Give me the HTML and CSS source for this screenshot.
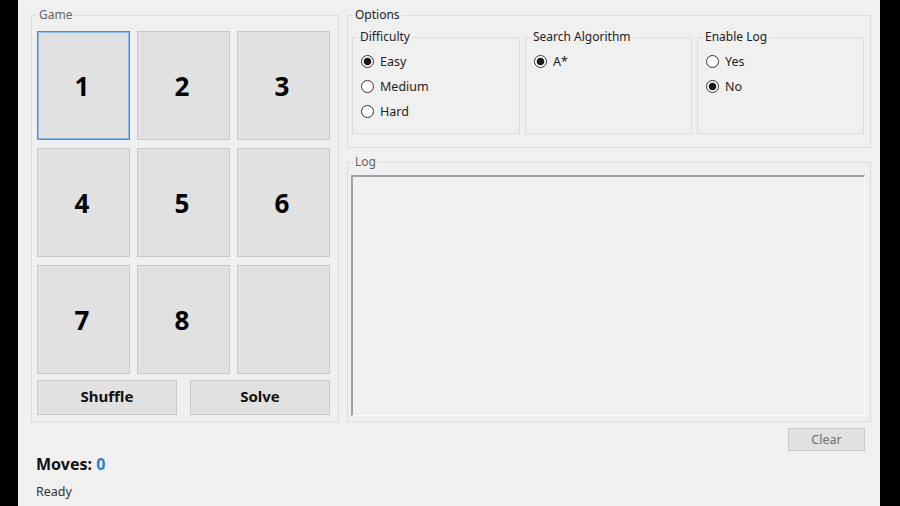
FILE: index.html
```html
<!DOCTYPE html>
<html>
<head>
<meta charset="utf-8">
<link rel="stylesheet" href="styles.css">
</head>
<body>
<div class="app">
  <div class="left">
    <div class="group game">
      <span class="gtitle light">Game</span>
      <div class="tiles">
        <div class="tile active">1</div>
        <div class="tile">2</div>
        <div class="tile">3</div>
        <div class="tile">4</div>
        <div class="tile">5</div>
        <div class="tile">6</div>
        <div class="tile">7</div>
        <div class="tile">8</div>
        <div class="tile"></div>
      </div>
      <div class="actions">
        <div class="btn">Shuffle</div>
        <div class="btn">Solve</div>
      </div>
    </div>
    <div class="moves">Moves: <span class="count">0</span></div>
    <div class="status">Ready</div>
  </div>
  <div class="right">
    <div class="group options">
      <span class="gtitle">Options</span>
      <div class="sub">
        <span class="gtitle">Difficulty</span>
        <div class="opt"><span class="radio on"></span>Easy</div>
        <div class="opt"><span class="radio"></span>Medium</div>
        <div class="opt"><span class="radio"></span>Hard</div>
      </div>
      <div class="sub">
        <span class="gtitle">Search Algorithm</span>
        <div class="opt"><span class="radio on"></span>A*</div>
      </div>
      <div class="sub">
        <span class="gtitle">Enable Log</span>
        <div class="opt"><span class="radio"></span>Yes</div>
        <div class="opt"><span class="radio on"></span>No</div>
      </div>
    </div>
    <div class="group log">
      <span class="gtitle light">Log</span>
      <div class="textbox"></div>
    </div>
    <div class="clearrow"><div class="btn clear">Clear</div></div>
  </div>
</div>
</body>
</html>
```
FILE: styles.css
```css
* { box-sizing: border-box; }
html, body { margin: 0; padding: 0; background: #000; }
body { width: 900px; height: 506px; overflow: hidden; font-family: "Noto Sans", "Open Sans", sans-serif; color: #222; }
.app {
  margin-left: 18px;
  width: 862px;
  height: 506px;
  background: #f0f0f0;
  display: flex;
  padding: 15px 0 0 13px;
  gap: 8px;
}
.group {
  position: relative;
  border: 1px solid #dcdcdc;
}
.gtitle {
  position: absolute;
  top: -9px;
  left: 5px;
  padding: 0 2px;
  background: #f0f0f0;
  font-size: 12px;
  line-height: 16px;
  color: #222;
}
.gtitle.light { color: #666; }
.left { width: 308px; display: flex; flex-direction: column; }
.game {
  width: 308px;
  height: 407px;
  padding: 15px 0 0 5px;
}
.tiles {
  display: grid;
  grid-template-columns: repeat(3, 93px);
  grid-auto-rows: 109px;
  column-gap: 7px;
  row-gap: 8px;
}
.tile {
  background: #e1e1e1;
  border: 1px solid #c8c8c8;
  display: flex;
  align-items: center;
  justify-content: center;
  font-size: 26px;
  font-weight: 700;
  color: #000;
  padding-right: 3px;
}
.tile.active {
  border-color: #3a8ee6;
  box-shadow: inset 0 0 0 1px #8fbdee;
}
.actions {
  display: flex;
  gap: 13px;
  margin-top: 6px;
}
.btn {
  background: #e1e1e1;
  border: 1px solid #c8c8c8;
  display: flex;
  align-items: center;
  justify-content: center;
}
.actions .btn {
  width: 140px;
  height: 35px;
  font-size: 15px;
  font-weight: 700;
  color: #111;
  padding-bottom: 3px;
}
.moves {
  margin-top: 31px;
  padding-left: 5px;
  font-size: 16px;
  font-weight: 700;
  line-height: 22px;
  color: #111;
}
.count { color: #2b7bd6; }
.status {
  margin-top: 8px;
  padding-left: 5px;
  font-size: 12.5px;
  line-height: 18px;
  color: #333;
}
.right { width: 524px; display: flex; flex-direction: column; }
.options {
  height: 133px;
  display: flex;
  gap: 5px;
  padding: 21px 0 0 4px;
}
.options > .gtitle { left: 5px; }
.sub {
  position: relative;
  border: 1px solid #dcdcdc;
  height: 97px;
  width: 167px;
  padding: 11px 0 0 8px;
}
.sub:first-of-type { width: 168px; }
.sub .gtitle { left: 5px; font-size: 12px; }
.opt {
  height: 25px;
  display: flex;
  align-items: center;
  gap: 6px;
  font-size: 12.5px;
  color: #222;
}
.radio {
  width: 13px;
  height: 13px;
  border: 1px solid #333;
  border-radius: 50%;
  background: #fff;
  flex: none;
}
.radio.on {
  background: radial-gradient(circle, #1a1a1a 0 3.4px, #fff 4.2px);
}
.log {
  margin-top: 14px;
  height: 260px;
  padding: 12px 5px 5px 3px;
}
.log .gtitle { left: 5px; }
.textbox {
  height: 100%;
  border-style: solid;
  border-width: 2px 1px 1px 2px;
  border-color: #a0a0a0 #fbfbfb #fbfbfb #a0a0a0;
  background: #f0f0f0;
}
.clearrow {
  display: flex;
  justify-content: flex-end;
  margin-top: 6px;
  padding-right: 6px;
}
.btn.clear {
  width: 77px;
  height: 23px;
  font-size: 12.5px;
  color: #6d6d6d;
}
```
